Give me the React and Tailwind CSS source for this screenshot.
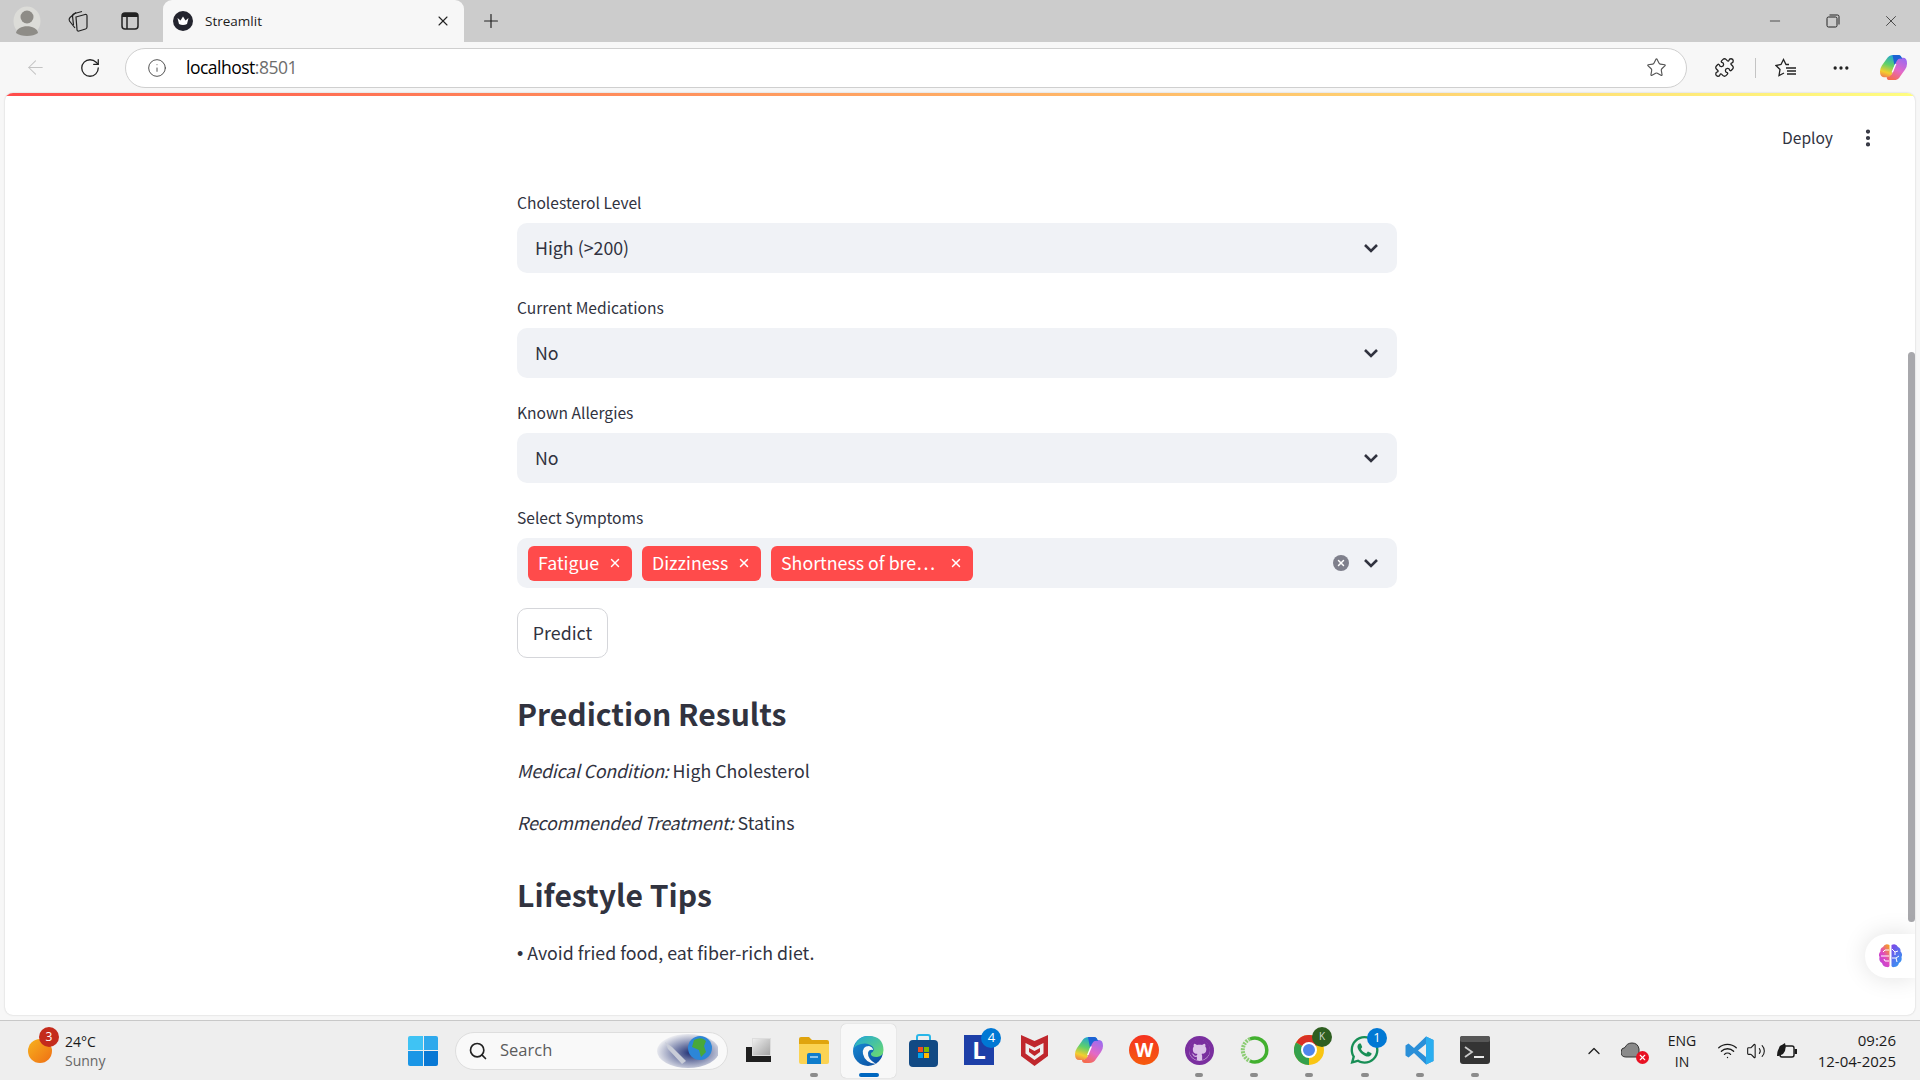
import { X, Search, Info, RotateCw, ArrowLeft, Plus, Star, Puzzle, MoreHorizontal, MoreVertical, Minus, ChevronUp, Wifi, Volume2 } from 'lucide-react'
import { FaGithub, FaWhatsapp } from 'react-icons/fa'

const textFont = "font-['Noto_Sans_CJK_SC','Noto_Sans',sans-serif]"
const uiFont = "font-['Open_Sans','Noto_Sans',sans-serif]"

function SelectBox({ label, value }) {
  return (
    <div className="mb-[20px]">
      <div className="h-[35px] text-[15.6px] leading-[28px] text-[#31333f]">{label}</div>
      <div className="flex h-[50px] items-center justify-between rounded-[10px] bg-[#f0f2f6] pl-[18px] pr-[18px]">
        <span className="pb-[2px] text-[17.8px] text-[#31333f]">{value}</span>
        <Chevron />
      </div>
    </div>
  )
}

function Chevron() {
  return (
    <svg width="16" height="10" viewBox="0 0 16 10" fill="none">
      <path d="M2 2 L8 8 L14 2" stroke="#31333f" strokeWidth="2.6" />
    </svg>
  )
}

function Tag({ text, w }) {
  return (
    <div className={`flex h-[35px] items-center justify-between rounded-[6px] bg-[#ff4b4b] pl-[10px] pr-[10px] text-[17.8px] text-white ${w}`}>
      <span className="whitespace-nowrap pb-[2px]">{text}</span>
      <X size={14} strokeWidth={2.5} />
    </div>
  )
}

function TopBar() {
  return (
    <div className={`${uiFont} shrink-0 bg-[#cccccc]`}>
      <div className="flex h-[42px] items-center">
        <div className="flex w-[52px] justify-center pl-[2px]">
          <svg width="28" height="30" viewBox="0 0 28 30">
            <ellipse cx="14" cy="15" rx="13.5" ry="14.5" fill="#dcdcd8" />
            <circle cx="14" cy="11" r="6.5" fill="#8e8c87" />
            <path d="M3 27 C4 18 24 18 25 27 C20 31 8 31 3 27 Z" fill="#8e8c87" />
          </svg>
        </div>
        <div className="flex w-[52px] justify-center">
          <svg width="22" height="24" viewBox="0 0 22 24" fill="none" stroke="#222" strokeWidth="1.2">
            <path d="M9 8 L18 5.5 Q20 5 20 7 V18 Q20 19.5 18.5 20 L12 22 Q10 22.5 10 20.5 Z" />
            <path d="M6.5 16 L5.5 7 Q5.5 5 7.5 4.5 L15 2.5" />
            <path d="M8 19 L2.5 12 Q1.5 10 3 8.5 L9 3.5" />
          </svg>
        </div>
        <div className="flex w-[52px] justify-center">
          <svg width="20" height="20" viewBox="0 0 20 20" fill="none">
            <rect x="2" y="2" width="16" height="16" rx="3" stroke="#222" strokeWidth="1.5" />
            <path d="M2 5 Q2 2 5 2 H15 Q18 2 18 5 V6 H2 Z" fill="#222" />
            <path d="M7 6 V18" stroke="#222" strokeWidth="1.5" />
          </svg>
        </div>
        <div className="ml-[7px] flex h-[42px] w-[301px] items-center rounded-t-[9px] bg-[#f7f7f7] pl-[10px] pr-[13px]">
          <svg width="20" height="20" viewBox="0 0 20 20">
            <circle cx="10" cy="10" r="10" fill="#23242e" />
            <path d="M4.5 7 L7.5 9.5 L10 5.5 L12.5 9.5 L15.5 7 L14 13 Q10 15 6 13 Z" fill="#fff" />
          </svg>
          <span className="ml-[12px] flex-1 text-[13.5px] text-[#1c1c1c]">Streamlit</span>
          <X size={16} strokeWidth={1.6} className="text-[#222]" />
        </div>
        <Plus size={22} strokeWidth={1.3} className="ml-[16px] text-[#222]" />
        <div className="ml-auto flex items-center">
          <div className="flex w-[58px] justify-center"><Minus size={16} strokeWidth={1} className="text-[#111]" /></div>
          <div className="flex w-[58px] justify-center">
            <svg width="14" height="14" viewBox="0 0 14 14" fill="none" stroke="#222" strokeWidth="1">
              <rect x="1" y="3" width="10" height="10" rx="1.5" />
              <path d="M3.5 1 H11.5 Q13 1 13 2.5 V10.5" />
            </svg>
          </div>
          <div className="flex w-[58px] justify-center"><X size={18} strokeWidth={1} className="text-[#222]" /></div>
        </div>
      </div>
      <div className="flex h-[51px] items-center bg-[#f7f7f7]">
        <div className="flex w-[70px] justify-center"><ArrowLeft size={23} strokeWidth={1.1} className="text-[#c4c4c4]" /></div>
        <div className="flex w-[40px] justify-center"><RotateCw size={22} strokeWidth={1.4} className="text-[#222]" /></div>
        <div className="ml-[15px] flex h-[40px] w-[1562px] items-center rounded-full border border-[#cfcfcf] bg-white pl-[21px] pr-[19px]">
          <Info size={20} strokeWidth={1.1} className="text-[#444]" />
          <span className="ml-[19px] flex-1 text-[17.5px] tracking-[-0.5px] text-black">localhost<span className="text-[#6d6d6d]">:8501</span></span>
          <Star size={21} strokeWidth={1.3} className="text-[#555]" />
        </div>
        <div className="flex w-[68px] justify-center pl-[6px]"><Puzzle size={21} strokeWidth={1.5} className="text-[#222]" /></div>
        <div className="h-[20px] w-[1px] bg-[#c4c4c4]" />
        <div className="flex w-[60px] justify-center">
          <svg width="22" height="20" viewBox="0 0 22 20" fill="none" stroke="#222" strokeWidth="1.3">
            <path d="M14 6.5 L11 6.5 L8.5 1.5 L6 6.5 L1 7.5 L5 11.5 L4 17.5 L9 15" />
            <path d="M11 10 H21 M12 13 H21 M12 16 H21" />
          </svg>
        </div>
        <div className="flex w-[50px] justify-center"><MoreHorizontal size={20} strokeWidth={2} className="text-[#222]" /></div>
        <div className="flex w-[54px] justify-center"><Copilot size={29} id="a" /></div>
      </div>
    </div>
  )
}

function Copilot({ size, id }) {
  return (
    <svg width={size} height={size} viewBox="0 0 30 30">
      <defs>
        <linearGradient id={`${id}l`} x1="0.6" y1="0" x2="0.3" y2="1">
          <stop offset="0" stopColor="#1fa2d8" />
          <stop offset="0.45" stopColor="#5fd06a" />
          <stop offset="0.8" stopColor="#f4cf2e" />
          <stop offset="1" stopColor="#f08a4b" />
        </linearGradient>
        <linearGradient id={`${id}r`} x1="0.8" y1="0" x2="0.3" y2="1">
          <stop offset="0" stopColor="#9a6cf0" />
          <stop offset="0.55" stopColor="#e368c8" />
          <stop offset="1" stopColor="#f56b4f" />
        </linearGradient>
      </defs>
      <path d="M8 6 Q10 2 15 2 H20 Q23 2 23 6 Q18 6 16.5 11 L13 23 Q12 25 8 25 H5 Q1 25 1 19 Q1 16 3 13 Z" fill={`url(#${id}l)`} />
      <path d="M22 24 Q20 28 15 28 H11 Q8 28 8 25 Q13 25 14.5 19 L18 7 Q19 5 22 5 H25 Q29 5 29 11 Q29 14 27 17 Z" fill={`url(#${id}r)`} />
      <path d="M14 2 H20 Q23 2 24 6 Q20 5 18.5 8 L16 13 Z" fill="#1c62d4" />
      <path d="M16.5 11.5 L18 11.5 L14.5 20 L13 20 Z" fill="#fff" />
    </svg>
  )
}

function Brain() {
  return (
    <svg width="25" height="26" viewBox="0 0 25 26" fill="none">
      <defs>
        <linearGradient id="brainL" x1="0.8" y1="0" x2="0" y2="1">
          <stop offset="0" stopColor="#f59a2a" />
          <stop offset="0.45" stopColor="#e04ac0" />
          <stop offset="1" stopColor="#b13fe0" />
        </linearGradient>
        <linearGradient id="brainR" x1="0.2" y1="0" x2="0.8" y2="1">
          <stop offset="0" stopColor="#7a4be8" />
          <stop offset="1" stopColor="#2f9df4" />
        </linearGradient>
      </defs>
      <path d="M11.5 2 Q7 0 5 4 Q2 5 2.5 8.5 Q0 11 1.5 14 Q0.5 18 4 20 Q5 24 9 24 Q11 24.5 11.5 23 Z" fill="url(#brainL)" />
      <path d="M13.5 2 Q18 0 20 4 Q23 5 22.5 8.5 Q25 11 23.5 14 Q24.5 18 21 20 Q20 24 16 24 Q14 24.5 13.5 23 Z" fill="url(#brainR)" />
      <path d="M11 7 H7 L5 9 M11 13 H3 M11 18 H7 L6 16" stroke="#fff" strokeWidth="1" />
      <path d="M14 6 L17 9 L20 8 M17 9 V12 M14 15 H18 L21 13 M18 15 L19 19" stroke="#fff" strokeWidth="1" />
    </svg>
  )
}

function Badge({ children, bg = 'bg-[#0078d4]' }) {
  return (
    <div className={`absolute -right-[7px] -top-[7px] flex h-[20px] w-[20px] items-center justify-center rounded-full text-[13px] text-white ${bg}`}>{children}</div>
  )
}

function AppSlot({ dot, children, active }) {
  return (
    <div className={`relative flex h-[54px] w-[55.1px] shrink-0 items-center justify-center rounded-[5px] pb-[1px] ${active ? 'bg-[#f8f8f8] shadow-[0_0_1px_rgba(0,0,0,0.25)]' : ''}`}>
      <div className="relative flex h-[31px] w-[31px] items-center justify-center">{children}</div>
      {dot && <div className="absolute bottom-[1px] left-1/2 h-[4px] w-[8px] -translate-x-1/2 rounded-full bg-[#8b8b8b]" />}
      {active && <div className="absolute bottom-[1px] left-1/2 h-[4px] w-[20px] -translate-x-1/2 rounded-full bg-[#0067c0]" />}
    </div>
  )
}

function Taskbar() {
  return (
    <div className={`${uiFont} flex h-[60px] shrink-0 items-center border-t border-[#c8c8c8] bg-[#eeeeee]`}>
      {/* weather */}
      <div className="relative ml-[28px] h-[24px] w-[24px] self-center">
        <div className="h-[24px] w-[24px] rounded-full bg-gradient-to-br from-[#f6b21e] to-[#ee6d14]" />
        <div className="absolute -right-[7px] -top-[12px] flex h-[20px] w-[20px] items-center justify-center rounded-full bg-[#c42b1c] text-[12px] text-white">3</div>
      </div>
      <div className="ml-[13px] w-[60px] text-[14px] leading-[19px]">
        <div className="text-[#1a1a1a]">24°C</div>
        <div className="text-[#666]">Sunny</div>
      </div>
      {/* start */}
      <div className="ml-[283px] grid h-[30px] w-[30px] grid-cols-2 gap-[1px]">
        <div className="rounded-tl-[2px] bg-[#3fc3f4]" />
        <div className="rounded-tr-[2px] bg-[#2fa9ec]" />
        <div className="rounded-bl-[2px] bg-[#1a96e6]" />
        <div className="rounded-br-[2px] bg-[#0878d4]" />
      </div>
      {/* search */}
      <div className="ml-[17px] flex h-[38px] w-[273px] items-center rounded-full border border-[#dedede] bg-[#f9f9f9] pl-[12px] pr-[9px]">
        <Search size={20} strokeWidth={2} className="text-[#222]" />
        <span className="ml-[12px] flex-1 text-[16.5px] text-[#5c5c5c]">Search</span>
        <svg width="62" height="34" viewBox="0 0 62 34">
          <defs>
            <radialGradient id="sky" cx="0.55" cy="0.55" r="0.6">
              <stop offset="0" stopColor="#1c2c72" />
              <stop offset="1" stopColor="#1c2c72" stopOpacity="0" />
            </radialGradient>
          </defs>
          <ellipse cx="32" cy="17" rx="31" ry="17" fill="url(#sky)" />
          <path d="M9 8 L16 13 L30 27 L26 30 L12 15 Z" fill="#c9cdd8" />
          <circle cx="44" cy="14" r="12" fill="#2c86d8" />
          <path d="M38 6 Q46 2 50 7 L48 12 L50 18 L45 23 L43 16 L36 13 Z" fill="#48a83a" />
        </svg>
      </div>
      {/* apps */}
      <div className="ml-[3px] flex items-center">
        <AppSlot>
          <div className="relative h-[24px] w-[25px]">
            <div className="absolute bottom-0 left-0 h-[15px] w-[25px] bg-[#1f1f1f]" />
            <div className="absolute right-0 top-0 h-[18px] w-[19px] border border-[#ddd] bg-gradient-to-br from-[#eeeeee] to-[#a5a5a5]" />
          </div>
        </AppSlot>
        <AppSlot dot>
          <svg width="30" height="28" viewBox="0 0 30 28">
            <path d="M0 3 Q0 1 2 1 H10 L13 4 H28 Q30 4 30 6 V10 H0 Z" fill="#e0a40e" />
            <path d="M0 8 H30 V26 Q30 28 28 28 H2 Q0 28 0 26 Z" fill="#fbd353" />
            <path d="M8 19 Q8 17 10 17 H20 Q22 17 22 19 V28 H8 Z" fill="#0e7ccb" />
            <path d="M11 21 H19" stroke="#bfe2fa" strokeWidth="1.4" />
          </svg>
        </AppSlot>
        <AppSlot active>
          <svg width="31" height="31" viewBox="0 0 31 31">
            <defs>
              <linearGradient id="edgeA" x1="0" y1="0" x2="1" y2="1">
                <stop offset="0" stopColor="#1fa8d8" />
                <stop offset="1" stopColor="#6fdc6a" />
              </linearGradient>
              <linearGradient id="edgeB" x1="0" y1="0" x2="0.8" y2="1">
                <stop offset="0" stopColor="#1a91d8" />
                <stop offset="1" stopColor="#0b4fa3" />
              </linearGradient>
            </defs>
            <circle cx="15" cy="16" r="15" fill="url(#edgeB)" />
            <path d="M1 13 Q4 1 16 1 Q30 1 30.5 15 Q30.5 21 24 22 Q17 22 18 18 Q22 16 20 12 Q15 7 8 9 Q3 10 1 13Z" fill="url(#edgeA)" />
            <path d="M10 19 Q9 11 16 11 Q20 12 20 15 Q16 14 15 18 Q14.5 24 23 29 Q12 28 10 19Z" fill="#f8f8f8" />
          </svg>
        </AppSlot>
        <AppSlot>
          <svg width="29" height="33" viewBox="0 0 29 33">
            <path d="M8 8 V3 Q8 1 10 1 H19 Q21 1 21 3 V8" fill="none" stroke="#29b6e8" strokeWidth="2" />
            <rect x="0" y="6" width="29" height="27" rx="4" fill="#124a84" />
            <rect x="9" y="13" width="5" height="5" fill="#f25022" />
            <rect x="15" y="13" width="5" height="5" fill="#7fba00" />
            <rect x="9" y="19" width="5" height="5" fill="#00a4ef" />
            <rect x="15" y="19" width="5" height="5" fill="#ffb900" />
          </svg>
        </AppSlot>
        <AppSlot>
          <div className="flex h-[30px] w-[30px] items-center justify-center bg-[#1d3fa8] text-[24px] font-bold leading-none text-white">L</div>
          <Badge>4</Badge>
        </AppSlot>
        <AppSlot>
          <svg width="27" height="31" viewBox="0 0 27 31">
            <path fillRule="evenodd" d="M0 0 L13.5 6 L27 0 V21 L13.5 31 L0 21 Z M4.5 8 V18.5 L13.5 25 L22.5 18.5 V8 L13.5 12.5 Z" fill="#c0272d" />
            <path d="M8 13 L13.5 16 L19 13 V17 L13.5 21 L8 17 Z" fill="#c0272d" />
          </svg>
        </AppSlot>
        <AppSlot><Copilot size={30} id="b" /></AppSlot>
        <AppSlot>
          <div className="flex h-[30px] w-[30px] items-center justify-center rounded-full bg-gradient-to-b from-[#f5311f] to-[#f65a0b] text-[19px] font-bold leading-none text-white">W</div>
        </AppSlot>
        <AppSlot dot>
          <div className="flex h-[29px] w-[29px] items-center justify-center rounded-full bg-[#7a2f9f]">
            <div className="flex h-[21px] w-[21px] items-center justify-center rounded-full bg-[#dcc4e8]">
              <FaGithub size={22} className="text-[#7a2f9f]" />
            </div>
          </div>
        </AppSlot>
        <AppSlot dot>
          <svg width="30" height="30" viewBox="0 0 30 30" fill="none">
            <path d="M11 4 A12 12 0 0 0 11 26" stroke="#8ccc74" strokeWidth="4" strokeDasharray="2 1" />
            <path d="M11 26 A12 12 0 1 0 11 4" stroke="#42b02f" strokeWidth="3.5" />
          </svg>
        </AppSlot>
        <AppSlot dot>
          <svg width="30" height="30" viewBox="0 0 30 30">
            <circle cx="15" cy="15" r="15" fill="#f9c513" />
            <path d="M15 15 L2 7.5 A15 15 0 0 1 28 7.5 Z" fill="#d93025" />
            <path d="M15 15 L2 7.5 A15 15 0 0 0 15 30 Z" fill="#34a04c" />
            <circle cx="15" cy="15" r="7" fill="#4f86ec" stroke="#fff" strokeWidth="2" />
          </svg>
          <div className="absolute -right-[7px] -top-[8px] flex h-[20px] w-[20px] items-center justify-center rounded-full bg-[#2e5e20] text-[10px] text-[#d4dcd0]">K</div>
        </AppSlot>
        <AppSlot dot>
          <FaWhatsapp size={32} className="text-[#178e55]" />
          <Badge>1</Badge>
        </AppSlot>
        <AppSlot dot>
          <svg width="29" height="29" viewBox="0 0 29 29">
            <path d="M21 0.5 L28.5 4 V25 L21 28.5 L9 17 L3.5 21.5 L0.5 19.5 V9.5 L3.5 7.5 L9 12 Z M21 8 L13 14.5 L21 21 Z" fill="#2a8fd8" fillRule="evenodd" />
            <path d="M21 0.5 L28.5 4 V25 L21 28.5 Z" fill="#2aaef0" />
          </svg>
        </AppSlot>
        <AppSlot dot>
          <svg width="30" height="28" viewBox="0 0 30 28">
            <rect x="0" y="0" width="30" height="28" rx="3" fill="#343434" />
            <rect x="0" y="0" width="30" height="6" rx="2" fill="#575757" />
            <path d="M5 11 L12 16 L5 21" stroke="#c9c9c9" strokeWidth="1.8" fill="none" />
            <path d="M14 21 H24" stroke="#fff" strokeWidth="1.8" />
          </svg>
        </AppSlot>
      </div>
      {/* tray */}
      <div className="ml-auto flex items-center pr-[24px]">
        <ChevronUp size={20} strokeWidth={1.6} className="text-[#222]" />
        <div className="relative ml-[17px] h-[18px] w-[24px]">
          <svg width="24" height="18" viewBox="0 0 24 18" fill="none">
            <path d="M5 15 Q0 15 0 10 Q0 6 4 5.5 Q6 1 11 1 Q17 1 18 7 L18 15 Z" fill="#8a8a8a" stroke="#333" strokeWidth="1" />
          </svg>
          <div className="absolute -bottom-[4px] right-[-4px] flex h-[13px] w-[13px] items-center justify-center rounded-full bg-[#e81123] text-white">
            <X size={9} strokeWidth={3} />
          </div>
        </div>
        <div className="ml-[21px] w-[32px] text-center text-[14px] leading-[21px] text-[#1a1a1a]">
          <div>ENG</div>
          <div>IN</div>
        </div>
        <Wifi size={21} strokeWidth={1.5} className="ml-[19px] text-[#1a1a1a]" />
        <Volume2 size={20} strokeWidth={1.3} className="ml-[8px] text-[#1a1a1a]" />
        <svg width="22" height="18" viewBox="0 0 22 18" fill="none" className="ml-[10px]">
          <rect x="4" y="4" width="14" height="11" rx="2" stroke="#1a1a1a" strokeWidth="1.4" />
          <rect x="18.5" y="7" width="2.5" height="5" fill="#1a1a1a" />
          <path d="M1 14 Q1 5 9 1 Q11 8 7 12 Q4 14 1 14 Z" fill="#1a1a1a" />
        </svg>
        <div className="ml-[10px] w-[88px] text-right text-[15px] leading-[21px] text-[#1a1a1a]">
          <div>09:26</div>
          <div className="whitespace-nowrap">12-04-2025</div>
        </div>
      </div>
    </div>
  )
}

export default function App() {
  return (
    <div className="flex h-screen flex-col overflow-hidden bg-[#f7f7f7]">
      <TopBar />
      <div className="min-h-0 flex-1 px-[5px] pb-[5px]">
        <div className={`${textFont} relative h-full overflow-hidden rounded-[8px] bg-white text-[#31333f] shadow-[0_0_2px_rgba(0,0,0,0.2)]`}>
          <div className="h-[3px] bg-gradient-to-r from-[#ff4b4b] to-[#fffd80]" />
          <div className="flex h-[84px] items-center justify-end pr-[36px]">
            <span className="text-[15.6px]">Deploy</span>
            <MoreVertical size={22} strokeWidth={2.6} className="ml-[24px]" />
          </div>
          <div className="ml-[512px] mt-[8px] w-[880px]">
            <SelectBox label="Cholesterol Level" value="High (>200)" />
            <SelectBox label="Current Medications" value="No" />
            <SelectBox label="Known Allergies" value="No" />
            <div className="h-[35px] text-[15.6px] leading-[28px]">Select Symptoms</div>
            <div className="flex h-[50px] items-center rounded-[10px] bg-[#f0f2f6] pl-[11px] pr-[18px]">
              <div className="flex gap-[10px]">
                <Tag text="Fatigue" w="w-[104px]" />
                <Tag text="Dizziness" w="w-[119px]" />
                <Tag text="Shortness of bre…" w="w-[202px]" />
              </div>
              <div className="ml-auto flex h-[16px] w-[16px] items-center justify-center rounded-full bg-[#7f808c] text-white">
                <X size={10} strokeWidth={3.5} />
              </div>
              <div className="ml-[14px]"><Chevron /></div>
            </div>
            <button className="mt-[20px] flex h-[50px] w-[91px] items-center justify-center rounded-[10px] border border-[#d5d6da] bg-white pb-[2px] text-[17.8px]">Predict</button>
            <h2 className="mt-[31px] text-[30.1px] font-semibold leading-[48px]">Prediction Results</h2>
            <p className="mt-[17px] text-[17.8px] leading-[32px]"><em className="tracking-[-0.2px]">Medical Condition:</em> High Cholesterol</p>
            <p className="mt-[20px] text-[17.8px] leading-[32px]"><em className="tracking-[-0.22px]">Recommended Treatment:</em> Statins</p>
            <h2 className="mt-[32px] text-[30.1px] font-semibold leading-[48px]">Lifestyle Tips</h2>
            <p className="mt-[18px] text-[17.8px] leading-[32px]"><span className="font-['Liberation_Sans',sans-serif]">•</span> Avoid fried food, eat fiber-rich diet.</p>
          </div>
          {/* scrollbar */}
          <div className="absolute right-0 top-[259px] h-[570px] w-[7px] rounded-full bg-[#a8a8ac]" />
          {/* floating brain button */}
          <div className="absolute bottom-[37px] right-0 flex h-[44px] w-[50px] items-center rounded-l-[22px] bg-white pl-[13px] shadow-[0_0_24px_rgba(0,0,0,0.12)]">
            <Brain />
          </div>
        </div>
      </div>
      <Taskbar />
    </div>
  )
}
